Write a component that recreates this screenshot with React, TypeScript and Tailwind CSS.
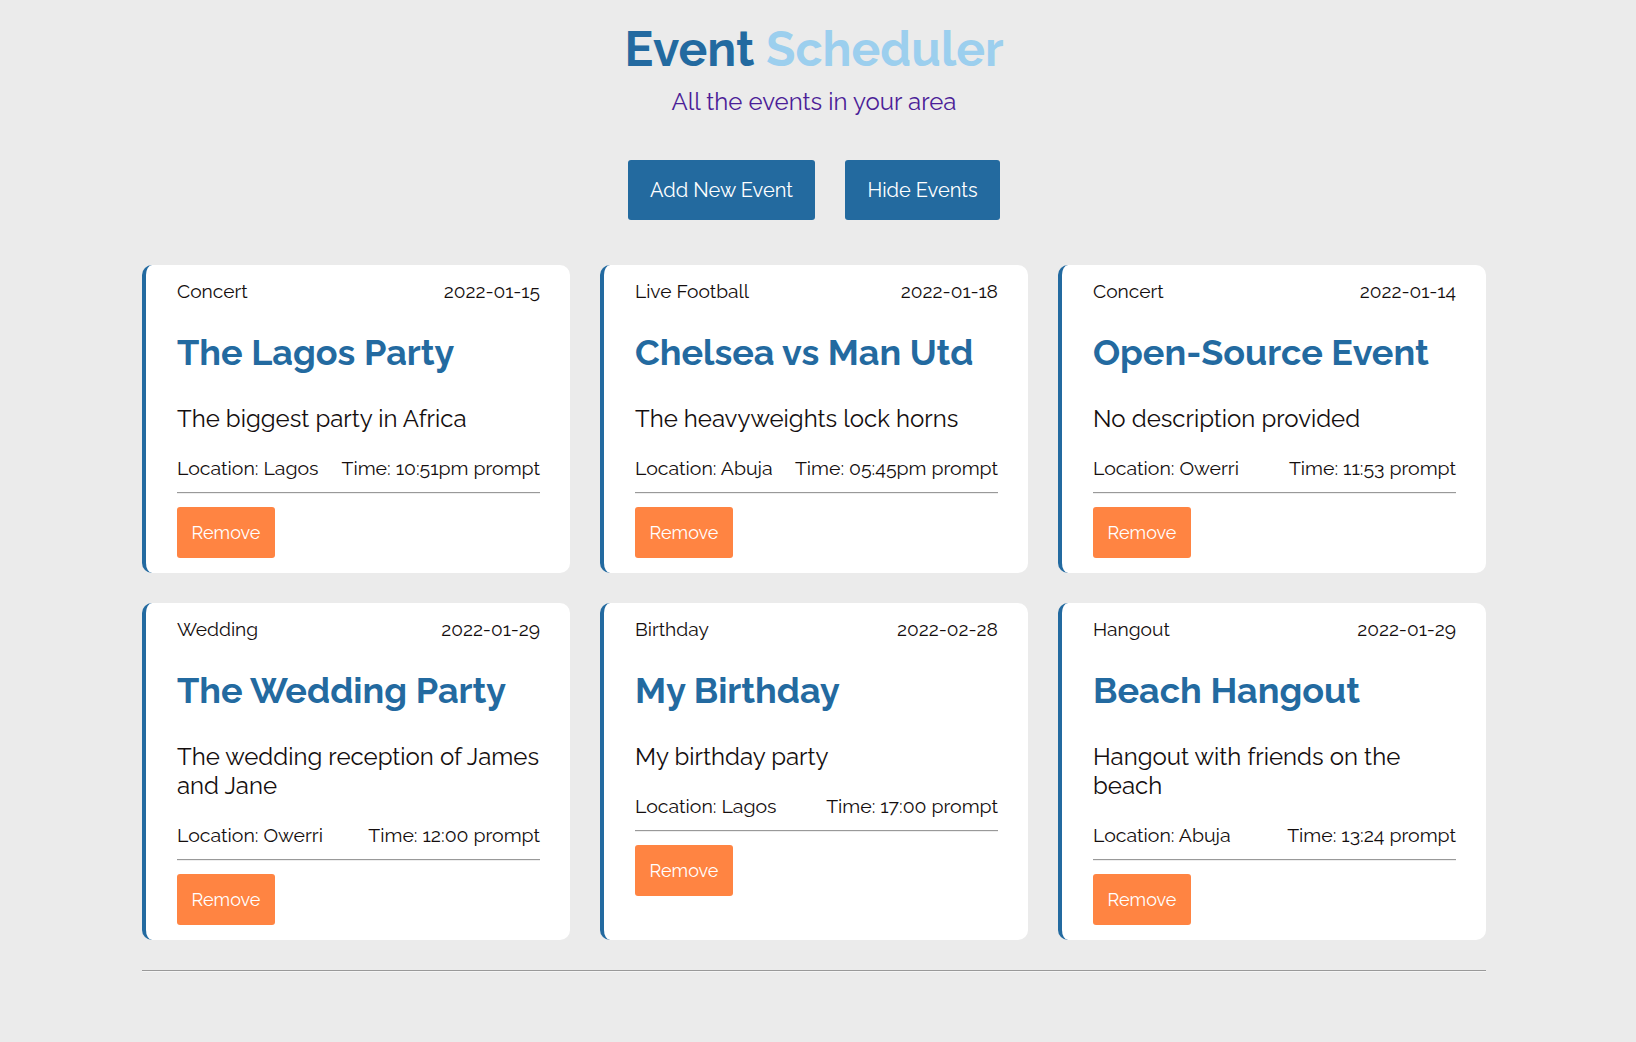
import React from 'react'

type EventItem = {
  id: number
  category: string
  date: string
  title: string
  description: string
  location: string
  time: string
}

const events: EventItem[] = [
  { id: 1, category: 'Concert', date: '2022-01-15', title: 'The Lagos Party', description: 'The biggest party in Africa', location: 'Lagos', time: '10:51pm' },
  { id: 2, category: 'Live Football', date: '2022-01-18', title: 'Chelsea vs Man Utd', description: 'The heavyweights lock horns', location: 'Abuja', time: '05:45pm' },
  { id: 3, category: 'Concert', date: '2022-01-14', title: 'Open-Source Event', description: 'No description provided', location: 'Owerri', time: '11:53' },
  { id: 4, category: 'Wedding', date: '2022-01-29', title: 'The Wedding Party', description: 'The wedding reception of James and Jane', location: 'Owerri', time: '12:00' },
  { id: 5, category: 'Birthday', date: '2022-02-28', title: 'My Birthday', description: 'My birthday party', location: 'Lagos', time: '17:00' },
  { id: 6, category: 'Hangout', date: '2022-01-29', title: 'Beach Hangout', description: 'Hangout with friends on the beach', location: 'Abuja', time: '13:24' },
]

function EventCard({ event }: { event: EventItem }) {
  return (
    <div className="bg-white rounded-[10px] border-l-4 border-[#236aa0] pl-[31px] pr-[30px] pt-[14px] pb-[15px] text-[#140e0e]">
      <div className="flex justify-between items-baseline text-[19.2px] leading-[24px]">
        <span>{event.category}</span>
        <span>{event.date}</span>
      </div>
      <h2 className="mt-[28px] text-[36px] leading-[42px] font-bold text-[#236aa0]">{event.title}</h2>
      <p className="mt-[31px] text-[24px] leading-[29px]">{event.description}</p>
      <div className="mt-[24px] flex justify-between text-[19.5px] leading-[24px]">
        <span>Location: {event.location}</span>
        <span>Time: {event.time} prompt</span>
      </div>
      <div className="mt-[11px] border-t border-[#999] border-b border-b-[#eee]" />
      <button className="mt-[13px] w-[98px] h-[51px] rounded-[3px] bg-[#ff8442] text-white text-[18px]">
        Remove
      </button>
    </div>
  )
}

export default function App() {
  return (
    <div className="min-h-screen bg-[#ebebeb] font-[Raleway,Lato,sans-serif]">
      <div className="w-[1628px] pt-[21px] pb-[70px]">
        <div className="mx-auto w-[1344px]">
          <header className="flex flex-col items-center">
            <h1 className="text-[48px] leading-[56px] font-bold">
              <span className="text-[#236aa0]">Event</span>{' '}
              <span className="text-[#9ccfee]">Scheduler</span>
            </h1>
            <p className="mt-[10px] text-[24px] leading-[30px] text-[#4b1e98]">All the events in your area</p>
            <div className="mt-[43px] flex gap-[30px]">
              <button className="w-[187px] h-[60px] rounded-[3px] bg-[#236a9f] text-white text-[20px]">Add New Event</button>
              <button className="w-[155px] h-[60px] rounded-[3px] bg-[#236a9f] text-white text-[20px]">Hide Events</button>
            </div>
          </header>

          <div className="mt-[45px] grid grid-cols-3 gap-[30px]">
            {events.map((e) => (
              <EventCard key={e.id} event={e} />
            ))}
          </div>

          <div className="mt-[30px] border-t border-[#999] border-b border-b-[#f5f5f5]" />
        </div>
      </div>
    </div>
  )
}
